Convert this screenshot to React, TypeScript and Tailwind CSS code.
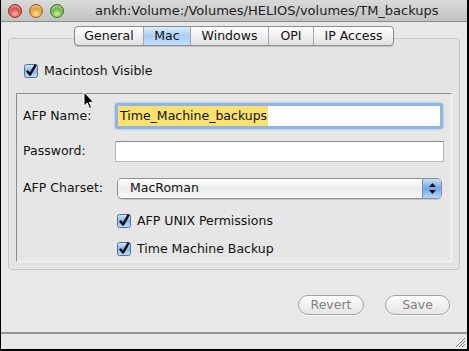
import React from "react";

const font = { fontFamily: '"DejaVu Sans", "Liberation Sans", sans-serif' };

const tabs = [
  { label: "General", w: "w-[68px]" },
  { label: "Mac", w: "w-[47px]", active: true },
  { label: "Windows", w: "w-[78px]" },
  { label: "OPI", w: "w-[45px]" },
  { label: "IP Access", w: "w-[80px]" },
];

const Light = ({ from, to, ring }: { from: string; to: string; ring: string }) => (
  <div
    className="w-[14px] h-[14px] rounded-full border"
    style={{
      borderColor: ring,
      background: `radial-gradient(circle at 50% 75%, ${to} 0%, ${from} 70%)`,
      boxShadow: "inset 0 2px 2px rgba(255,255,255,0.55)",
    }}
  />
);

const Check = () => (
  <svg width="14" height="14" viewBox="0 0 14 14" className="shrink-0 overflow-visible">
    <defs>
      <linearGradient id="cbg" x1="0" y1="0" x2="0" y2="1">
        <stop offset="0" stopColor="#d6e8fc" />
        <stop offset="0.5" stopColor="#86b8ee" />
        <stop offset="1" stopColor="#c3e0fc" />
      </linearGradient>
    </defs>
    <rect x="0.5" y="0.5" width="13" height="13" rx="2" fill="url(#cbg)" stroke="#50719c" />
    <path d="M3 6.8 L6 10.6 L11.8 0.6" stroke="#111" strokeWidth="2.5" fill="none" strokeLinejoin="round" />
  </svg>
);

const Cursor = () => (
  <svg width="12" height="19" viewBox="0 0 12 19" className="absolute left-[82px] top-[91px]">
    <path d="M1 1 L1 15 L4.2 12 L6.6 17.5 L8.6 16.6 L6.3 11.3 L10.6 11.3 Z" fill="#000" stroke="#fff" strokeWidth="1" />
  </svg>
);

const Button = ({ label, w }: { label: string; w: string }) => (
  <div
    className={`${w} h-[20px] rounded-full border border-[#a2a2a2] flex items-center justify-center text-[12.5px] text-[#808080] bg-gradient-to-b from-[#fdfdfd] via-[#f1f1f1] to-[#e6e6e6] shadow-[0_1px_0_rgba(255,255,255,0.8)]`}
  >
    {label}
  </div>
);

export default function App() {
  return (
    <div
      className="relative w-[469px] h-[351px] bg-[#e8e8e8] border-l border-r-2 border-b-2 border-black flex flex-col text-[#111]"
      style={font}
    >
      {/* title bar */}
      <div className="h-[22px] shrink-0 flex items-center bg-gradient-to-b from-[#dadada] to-[#c2c2c2] border-b border-[#8a8a8a] pl-[7px]">
        <div className="flex gap-[7px]">
          <Light from="#c8261f" to="#ffb0a8" ring="#8c2d27" />
          <Light from="#d9801a" to="#ffe28f" ring="#96601d" />
          <Light from="#4d9b21" to="#c9f39a" ring="#3b6f1f" />
        </div>
        <div className="ml-[31px] text-[13px] text-[#222] whitespace-nowrap">
          ankh:Volume:/Volumes/HELIOS/volumes/TM_backups
        </div>
      </div>

      {/* tab control + box */}
      <div className="pt-[4px] px-[7px] flex flex-col">
        <div className="relative z-10 mx-auto flex h-[20px] rounded-[4px] border border-[#8c8c8c] overflow-hidden bg-gradient-to-b from-[#ffffff] via-[#f0f0f0] to-[#e2e2e2] shadow-[0_1px_1px_rgba(0,0,0,0.15)]">
          {tabs.map((t, i) => (
            <div
              key={t.label}
              className={`${t.w} flex items-center justify-center text-[12.5px] ${
                i > 0 ? "border-l border-[#a6a6a6]" : ""
              } ${t.active ? "bg-gradient-to-b from-[#dcebfb] via-[#a9cdf5] to-[#c4e0fb]" : ""}`}
            >
              {t.label}
            </div>
          ))}
        </div>

        <div className="-mt-[8px] h-[232px] rounded-[4px] border border-[#c6c6c6] bg-[#e4e4e4] flex flex-col px-[7px] pt-[25px]">
          <div className="h-[14px] flex items-center gap-[6px] pl-[8px] text-[12.5px]">
            <Check />
            <span>Macintosh Visible</span>
          </div>

          <div className="mt-[15px] h-[169px] border border-[#8e8e8e] border-r-[#f6f6f6] border-b-[#f6f6f6] bg-[#e6e6e6] flex flex-col pl-[6px] pt-[9px] text-[12.5px]">
            <div className="h-[26px] flex items-center">
              <div className="w-[92px]">AFP Name:</div>
              <div className="w-[328px] h-[26px] rounded-[3px] border-[3px] border-[#8fb4e6] bg-white flex items-center shadow-[0_0_2px_#6d9be0]">
                <span className="bg-[#fae16f] h-[20px] flex items-center pl-[2px] pr-[1px]">Time_Machine_backups</span>
              </div>
            </div>

            <div className="mt-[12px] h-[21px] flex items-center">
              <div className="w-[92px]">Password:</div>
              <div className="w-[329px] h-[21px] border border-[#b8b8b8] border-t-[#8a8a8a] bg-white" />
            </div>

            <div className="mt-[16px] h-[21px] flex items-center">
              <div className="w-[94px]">AFP Charset:</div>
              <div className="w-[325px] h-[21px] rounded-[5px] border border-[#8f8f8f] flex overflow-hidden shadow-[0_1px_1px_rgba(0,0,0,0.15)]">
                <div className="flex-1 flex items-center pl-[12px] bg-gradient-to-b from-[#ffffff] via-[#ececec] to-[#f8f8f8]">
                  MacRoman
                </div>
                <div className="w-[19px] flex items-center justify-center border-l border-[#6f8fbf] bg-gradient-to-b from-[#c6e0fb] via-[#6fa8ea] to-[#b4d6fa]">
                  <svg width="7" height="11" viewBox="0 0 7 11">
                    <path d="M3.5 0 L7 4 L0 4 Z M0 7 L7 7 L3.5 11 Z" fill="#111" />
                  </svg>
                </div>
              </div>
            </div>

            <div className="mt-[12px] h-[20px] flex items-center gap-[6px] pl-[94px]">
              <Check />
              <span>AFP UNIX Permissions</span>
            </div>
            <div className="mt-[8px] h-[20px] flex items-center gap-[6px] pl-[94px]">
              <Check />
              <span>Time Machine Backup</span>
            </div>
          </div>
        </div>
      </div>

      {/* buttons */}
      <div className="mt-[25px] flex justify-end gap-[21px] pr-[17px]">
        <Button label="Revert" w="w-[66px]" />
        <Button label="Save" w="w-[65px]" />
      </div>

      {/* status bar */}
      <div className="mt-auto h-[17px] border-t-2 border-[#949494] flex justify-end items-end">
        <svg width="12" height="12" viewBox="0 0 12 12" className="mb-[1px] mr-[1px]">
          <path d="M11 2 L2 11 M11 5 L5 11 M11 8 L8 11" stroke="#7a7a7a" strokeWidth="1" />
        </svg>
      </div>

      <Cursor />
    </div>
  );
}
